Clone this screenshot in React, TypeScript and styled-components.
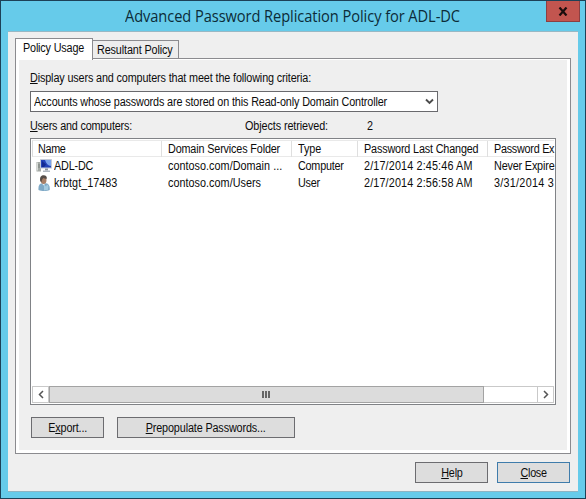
import React from "react";
import styled, { createGlobalStyle } from "styled-components";

const GlobalStyle = createGlobalStyle`
  *, *::before, *::after { box-sizing: border-box; }
  html, body { margin: 0; padding: 0; overflow: hidden; }
  body {
    font-family: "Liberation Sans", Arial, sans-serif;
    font-size: 12px;
    line-height: 17px;
    color: #0c0c0c;
  }
`;

const Window = styled.div`
  width: 586px;
  height: 499px;
  display: flex;
  flex-direction: column;
  border: 1px solid #1d4157;
  background: #66cbea;
`;

const TitleBar = styled.header`
  display: grid;
  grid-template-columns: 545px 34px;
  height: 30px;
  flex: none;
`;

const Title = styled.h1`
  margin: 0;
  padding-left: 124px;
  font: 400 16px/30px "Open Sans", "Noto Sans", sans-serif;
  color: #0c2b38;
  white-space: nowrap;
  span {
    display: inline-block;
    letter-spacing: -0.08px;
    transform: scaleX(0.915);
    transform-origin: left;
  }
`;

const CloseBox = styled.button`
  display: flex;
  align-items: center;
  justify-content: center;
  height: 21px;
  padding: 0;
  border: 1px solid #8c3f42;
  border-top: 0;
  background: #c2554f;
`;

const Client = styled.main`
  flex: 1;
  margin: 0 7px 6px;
  padding: 6px 7px 7px;
  display: flex;
  flex-direction: column;
  background: #efefef;
  border-top: 1px solid #98b8c4;
  border-bottom: 1px solid #8fb4c2;
`;

const Tabs = styled.nav`
  display: flex;
  align-items: flex-end;
  height: 20px;
`;

const Tab = styled.button<{ $active?: boolean }>`
  position: relative;
  z-index: ${(p) => (p.$active ? 1 : 0)};
  height: ${(p) => (p.$active ? "22px" : "18px")};
  width: ${(p) => (p.$active ? "78px" : "87px")};
  margin: ${(p) => (p.$active ? "0 0 -2px" : "0 0 0 -1px")};
  padding: ${(p) => (p.$active ? "0 0 3px 7px" : "1px 0 0 4px")};
  border: 1px solid #8b8b8f;
  border-bottom: 0;
  background: ${(p) => (p.$active ? "#fff" : "#ededed")};
  font: inherit;
  line-height: 16px;
  color: inherit;
  text-align: left;
  white-space: nowrap;
`;

const Panel = styled.section`
  height: 396px;
  flex: none;
  display: flex;
  flex-direction: column;
  padding: 8px 11px 0;
  border: 1px solid #8b8b8f;
  background: #efefef;
  box-shadow: inset 3px 0 #fff, inset -3px 0 #fff, inset 0 -3px #fff, inset 0 1px #fff;
`;

/* Condensed dialog lettering: narrow glyphs with near-normal gaps. */
const Label = styled.span<{ $track?: number; $centered?: boolean }>`
  display: inline-block;
  letter-spacing: ${(p) => p.$track ?? -0.1}px;
  transform: scaleX(0.9);
  transform-origin: ${(p) => (p.$centered ? "center" : "left")};
  white-space: pre;
  u {
    text-decoration-thickness: 1px;
    text-underline-offset: 1px;
    text-decoration-skip-ink: none;
  }
`;

const FieldLabel = styled.label`
  display: block;
  height: 20px;
  padding: 3px 0 0 3px;
`;

const Select = styled.div`
  display: flex;
  align-items: center;
  justify-content: space-between;
  width: 408px;
  height: 21px;
  margin: 4px 0 0 3px;
  padding: 2px 3px 0 3px;
  border: 1px solid #69696d;
  background: #fff;
  svg { flex: none; margin: -2px 0 0 -40px; }
`;

const Summary = styled.div`
  display: grid;
  grid-template-columns: 215px 122px 1fr;
  height: 26px;
  padding: 6px 0 0 3px;
`;

const ListView = styled.div`
  display: flex;
  flex-direction: column;
  width: 526px;
  height: 267px;
  margin-left: 3px;
  padding: 1px;
  border: 1px solid #808286;
  background: #fff;
  overflow: hidden;
`;

const Row = styled.div`
  display: grid;
  grid-template-columns: 130px 130px 66px 130px 66px;
  height: 17px;
`;

const HeaderRow = styled(Row)`
  border: 1px solid #e9e9e9;
  border-left-color: #dcdcdc;
  border-right: 0;
  grid-template-columns: 129px 130px 66px 130px 66px;
`;

const Cell = styled.div`
  padding-left: 6px;
  line-height: 18px;
`;

const HeaderCell = styled(Cell)`
  padding-left: 5px;
  border-right: 1px solid #dfdfdf;
  line-height: 16px;
  &:not(:first-child) { padding-left: 6px; }
  &:last-child { border-right: 0; }
`;

const NameCell = styled.div`
  display: flex;
  align-items: center;
  gap: 2px;
  padding-left: 4px;
  line-height: 18px;
`;

const ScrollBar = styled.div`
  display: grid;
  grid-template-columns: 17px 435px 1fr 17px;
  height: 17px;
  margin-top: auto;
  border: 1px solid #c9c9c9;
  border-width: 1px 0;
`;

const ScrollPart = styled.div<{ $thumb?: boolean; $edge?: boolean }>`
  display: flex;
  align-items: center;
  justify-content: center;
  margin: ${(p) => (p.$thumb ? "-1px 0" : "0")};
  background: ${(p) => (p.$thumb ? "#dcdcdc" : "#fff")};
  border: ${(p) => (p.$thumb ? "1px solid #a3a3a3" : p.$edge ? "solid #c9c9c9" : "0")};
  border-width: ${(p) => (p.$thumb ? "1px" : p.$edge ? "0 1px" : "0")};
`;

const Actions = styled.div`
  display: flex;
  gap: 13px;
  padding: 12px 0 0 4px;
`;

const Footer = styled.footer`
  display: flex;
  justify-content: flex-end;
  gap: 9px;
  padding: 8px 1px 0 0;
`;

const PushButton = styled.button<{ $wide?: boolean; $default?: boolean }>`
  width: ${(p) => (p.$wide ? "178px" : "73px")};
  height: 21px;
  padding: 2px 0 0;
  border: 1px solid ${(p) => (p.$default ? "#3f7cab" : "#6c6c70")};
  background: #dddddd;
  font: inherit;
  line-height: 17px;
  color: inherit;
  text-align: center;
`;

const ComputerIcon = () => (
  <svg width="16" height="16" viewBox="0 0 16 16">
    <rect x=".5" y="4" width="4.5" height="9.5" fill="#a5aaa6" />
    <path d="M1 4.5h1v8H1z" fill="#d8dcd8" />
    <path d="M2 7h2M2 9h2" stroke="#747d78" />
    <rect x="4" y="1" width="12" height="9.5" rx=".6" fill="#c3cad8" />
    <rect x="5" y="2" width="10" height="7.5" fill="#2443b8" />
    <path d="M9 2h6v6c-3-.3-5-2.5-6-6z" fill="#7ba3ea" />
    <path d="M6 3l4 3.500-2 2.500H6z" fill="#132a91" />
    <path d="M9 10.500h3v2H9z" fill="#8e969f" />
    <path d="M7 12.500h7v1.500H7z" fill="#b0b7c0" />
  </svg>
);

const UserIcon = () => (
  <svg width="16" height="16" viewBox="0 0 16 16">
    <path d="M2.500 15c-.4-4 .8-6.300 3.500-6.700h4c2.900.5 4.100 2.700 3.700 6.700-3 1.300-8.200 1.300-11.200 0z" fill="#7fa9c6" />
    <path d="M8 9l2 2.500 1-2 1.500 1.300-.5 4-4 .6z" fill="#a5cbe0" />
    <path d="M5.800 8.300L7.600 10.500l1.800-2.200z" fill="#e6eff4" />
    <ellipse cx="7.600" cy="5" rx="2.900" ry="3.900" fill="#a97f66" />
    <path d="M4.200 6C3.500 1.800 5.400.2 7.600.2c2.400 0 3.600 1.500 3.200 3.600C9.500 3.900 8 3.300 7.200 2.900 6.800 4 5.600 4.500 5.400 7.500z" fill="#564d48" />
  </svg>
);

const accounts = [
  { name: "ADL-DC", track: -0.2, Icon: ComputerIcon, folder: "contoso.com/Domain ...", type: "Computer", changed: "2/17/2014 2:45:46 AM", expires: "Never Expire", expiresTrack: -0.18 },
  { name: "krbtgt_17483", track: 0.03, Icon: UserIcon, folder: "contoso.com/Users", type: "User", changed: "2/17/2014 2:56:58 AM", expires: "3/31/2014 3", expiresTrack: 0.3 },
];

export default function App() {
  return (
    <>
      <GlobalStyle />
      <Window>
        <TitleBar>
          <Title><span>Advanced Password Replication Policy for ADL-DC</span></Title>
          <CloseBox aria-label="Close window">
            <svg width="10" height="9" viewBox="0 0 10 9">
              <path d="M1.500 .5L8.500 8.500M8.500 .5L1.500 8.500" stroke="#1b0d0d" strokeWidth="2.200" />
            </svg>
          </CloseBox>
        </TitleBar>
        <Client>
          <Tabs>
            <Tab $active><Label $track={-0.18}>Policy Usage</Label></Tab>
            <Tab><Label $track={-0.13}>Resultant Policy</Label></Tab>
          </Tabs>
          <Panel>
            <FieldLabel>
              <Label $track={-0.14}><u>D</u>isplay users and computers that meet the following criteria:</Label>
            </FieldLabel>
            <Select>
              <Label $track={-0.14}>Accounts whose passwords are stored on this Read-only Domain Controller</Label>
              <svg width="9" height="7" viewBox="0 0 9 7">
                <path d="M1 1.500L4.500 5L8 1.500" fill="none" stroke="#4c4c4c" strokeWidth="1.900" />
              </svg>
            </Select>
            <Summary>
              <Label $track={-0.2}><u>U</u>sers and computers:</Label>
              <Label $track={-0.1}>Objects retrieved:</Label>
              <Label>2</Label>
            </Summary>
            <ListView>
              <HeaderRow>
                <HeaderCell><Label $track={-0.35}>Name</Label></HeaderCell>
                <HeaderCell><Label $track={-0.16}>Domain Services Folder</Label></HeaderCell>
                <HeaderCell><Label>Type</Label></HeaderCell>
                <HeaderCell><Label $track={-0.17}>Password Last Changed</Label></HeaderCell>
                <HeaderCell><Label $track={-0.28}>Password Ex</Label></HeaderCell>
              </HeaderRow>
              {accounts.map(({ Icon, ...a }) => (
                <Row key={a.name}>
                  <NameCell><Icon /><Label $track={a.track}>{a.name}</Label></NameCell>
                  <Cell><Label $track={0.04}>{a.folder}</Label></Cell>
                  <Cell><Label $track={-0.25}>{a.type}</Label></Cell>
                  <Cell><Label $track={0.16}>{a.changed}</Label></Cell>
                  <Cell><Label $track={a.expiresTrack}>{a.expires}</Label></Cell>
                </Row>
              ))}
              <ScrollBar>
                <ScrollPart $edge>
                  <svg width="6" height="9" viewBox="0 0 6 9"><path d="M5 1L1.500 4.500L5 8" fill="none" stroke="#555" strokeWidth="1.500" /></svg>
                </ScrollPart>
                <ScrollPart $thumb>
                  <svg width="9" height="7" viewBox="0 0 9 7"><path d="M1 0v7M4 0v7M7 0v7" stroke="#666" strokeWidth="2" /></svg>
                </ScrollPart>
                <ScrollPart />
                <ScrollPart $edge>
                  <svg width="6" height="9" viewBox="0 0 6 9"><path d="M1 1L4.500 4.500L1 8" fill="none" stroke="#555" strokeWidth="1.500" /></svg>
                </ScrollPart>
              </ScrollBar>
            </ListView>
            <Actions>
              <PushButton><Label $centered $track={-0.15}>E<u>x</u>port...</Label></PushButton>
              <PushButton $wide><Label $centered $track={-0.14}><u>P</u>repopulate Passwords...</Label></PushButton>
            </Actions>
          </Panel>
          <Footer>
            <PushButton><Label $centered $track={-0.2}><u>H</u>elp</Label></PushButton>
            <PushButton $default><Label $centered $track={-0.3}><u>C</u>lose</Label></PushButton>
          </Footer>
        </Client>
      </Window>
    </>
  );
}
